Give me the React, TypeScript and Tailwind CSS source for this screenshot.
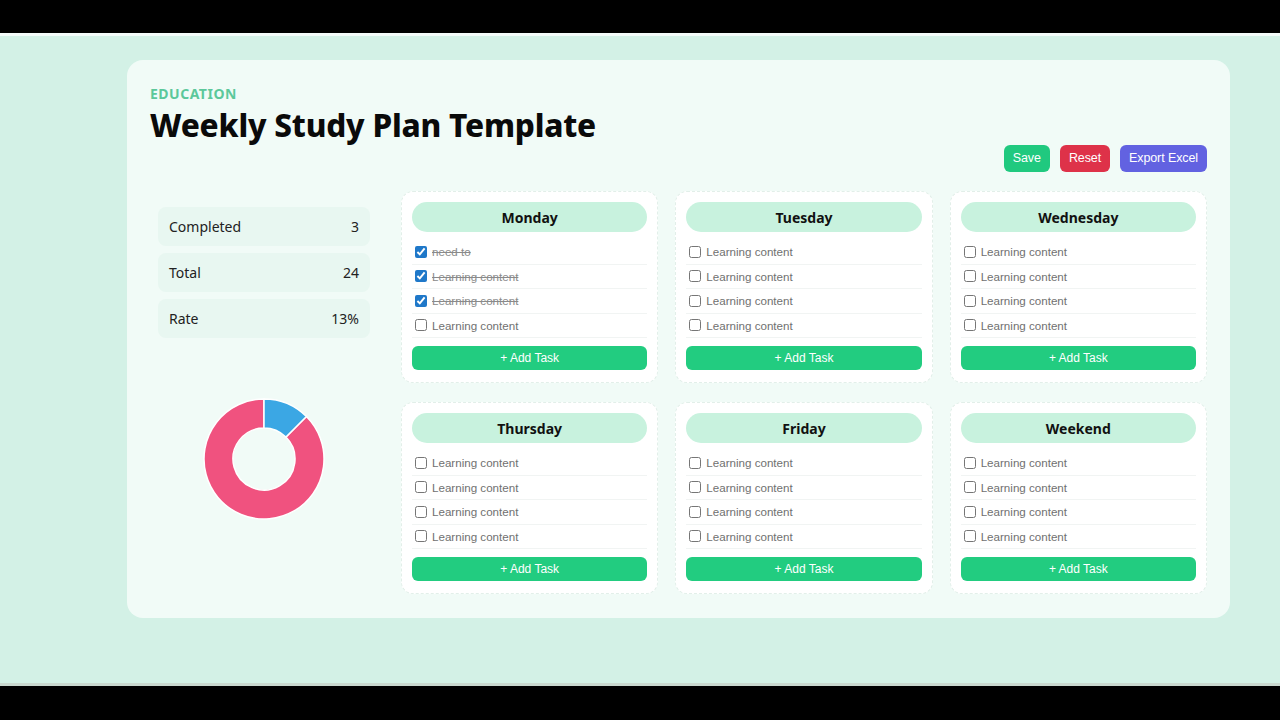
import React from 'react';

type Task = { text: string; done: boolean };

const days: { name: string; tasks: Task[] }[] = [
  {
    name: 'Monday',
    tasks: [
      { text: 'need to', done: true },
      { text: 'Learning content', done: true },
      { text: 'Learning content', done: true },
      { text: 'Learning content', done: false },
    ],
  },
  ...['Tuesday', 'Wednesday', 'Thursday', 'Friday', 'Weekend'].map((name) => ({
    name,
    tasks: [...Array(4)].map(() => ({ text: 'Learning content', done: false })),
  })),
];

const stats = [
  { label: 'Completed', value: '3' },
  { label: 'Total', value: '24' },
  { label: 'Rate', value: '13%' },
];

function Donut() {
  return (
    <svg width="122" height="122" viewBox="-1 -1 122 122">
      <path
        d="M102.43 17.57 A60 60 0 1 1 60 0 L60 29 A31 31 0 1 0 81.92 38.08 Z"
        fill="#f0527f"
        stroke="#ffffff"
        strokeWidth={1.5}
      />
      <path
        d="M60 0 A60 60 0 0 1 102.43 17.57 L81.92 38.08 A31 31 0 0 0 60 29 Z"
        fill="#3ba7e4"
        stroke="#ffffff"
        strokeWidth={1.5}
      />
    </svg>
  );
}

function DayCard({ name, tasks }: { name: string; tasks: Task[] }) {
  return (
    <div className="bg-white border border-dashed border-[#e2efe9] rounded-xl px-[10px] pt-[10px] pb-[12px]">
      {/* Day header */}
      <div className="h-[30px] rounded-full bg-[#c8f2de] flex items-center justify-center font-['Noto_Sans',sans-serif] font-bold text-[14px] text-[#111]">
        {name}
      </div>

      {/* Task list */}
      <div className="mt-[8px]">
        {tasks.map((t, i) => (
          <div key={i} className="h-[24.5px] flex items-center gap-[5px] px-[3px] border-b border-[#f1f4f3]">
            <input
              type="checkbox"
              readOnly
              checked={t.done}
              className="w-[12px] h-[12px] m-0 accent-[#1f78c9]"
            />
            <span
              className={`font-['Liberation_Sans',Arial,sans-serif] text-[11.6px] ${
                t.done ? 'line-through text-[#8a8a8a]' : 'text-[#707070]'
              }`}
            >
              {t.text}
            </span>
          </div>
        ))}
      </div>

      <button className="mt-[8px] w-full h-[24px] rounded-md bg-[#22cc80] text-white font-['Liberation_Sans',Arial,sans-serif] text-[12px]">
        + Add Task
      </button>
    </div>
  );
}

export default function App() {
  return (
    <div className="w-[1280px] h-[720px] bg-black flex flex-col overflow-hidden">
      <div className="h-[33px] shrink-0"></div>
      <div className="h-[3px] shrink-0 bg-[#f4fcf9]"></div>

      {/* Page */}
      <div className="h-[647px] shrink-0 bg-[#d3f1e6] pt-[24px]">
        <div className="ml-[127px] w-[1103px] h-[558px] rounded-2xl bg-[#f1fbf7] px-[23px] pt-[25px]">
          {/* Header */}
          <div className="flex justify-between items-end">
            <div className="pb-[25px]">
              <div className="font-['Noto_Sans',sans-serif] font-bold text-[14px] tracking-[0.5px] text-[#5cc89b] leading-[18px]">
                EDUCATION
              </div>
              <h1 className="font-['Noto_Sans',sans-serif] font-extrabold text-[31.5px] leading-[44px] text-[#0a0a0a] tracking-[-0.2px]">
                Weekly Study Plan Template
              </h1>
            </div>
            <div className="flex gap-[10px]">
              <button className="h-[27px] px-[9px] rounded-md bg-[#20c97f] text-white font-['Liberation_Sans',Arial,sans-serif] text-[12.5px] tracking-[-0.1px]">
                Save
              </button>
              <button className="h-[27px] px-[9px] rounded-md bg-[#de3249] text-white font-['Liberation_Sans',Arial,sans-serif] text-[12.5px] tracking-[-0.1px]">
                Reset
              </button>
              <button className="h-[27px] px-[9px] rounded-md bg-[#6262e1] text-white font-['Liberation_Sans',Arial,sans-serif] text-[12.5px] tracking-[-0.1px]">
                Export Excel
              </button>
            </div>
          </div>

          {/* Body */}
          <div className="mt-[19px] flex gap-[23px]">
            {/* Stats column */}
            <div className="w-[228px] shrink-0 px-[8px] pt-[16px] flex flex-col">
              <div className="flex flex-col gap-[7px]">
                {stats.map((s) => (
                  <div
                    key={s.label}
                    className="h-[39px] rounded-lg bg-[#e8f7f1] flex items-center justify-between px-[11px] font-['Noto_Sans',sans-serif] text-[14px] text-[#222]"
                  >
                    <span>{s.label}</span>
                    <span>{s.value}</span>
                  </div>
                ))}
              </div>
              <div className="mt-[60px] flex justify-center">
                <Donut />
              </div>
            </div>

            {/* Days grid */}
            <div className="w-[807px] grid grid-cols-3 gap-x-[17px] gap-y-[19px]">
              {days.map((d) => (
                <DayCard key={d.name} name={d.name} tasks={d.tasks} />
              ))}
            </div>
          </div>
        </div>
      </div>

      <div className="h-[3px] shrink-0 bg-[#c9d8cf]"></div>
      <div className="flex-1"></div>
    </div>
  );
}
